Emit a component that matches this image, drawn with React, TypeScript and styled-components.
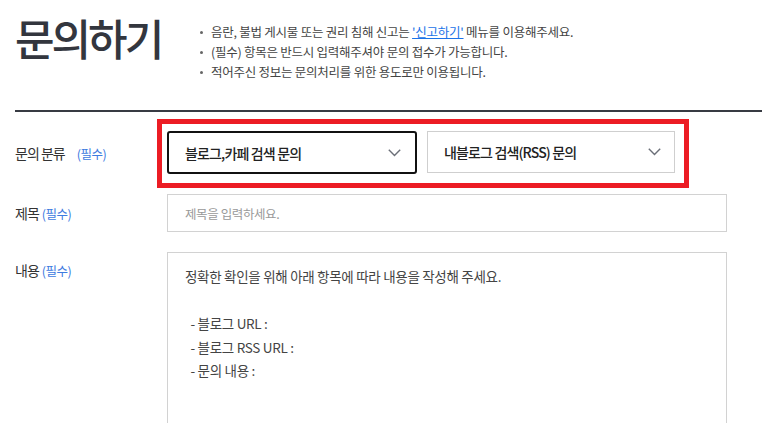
import React from 'react'
import styled, { createGlobalStyle } from 'styled-components'

const GlobalStyle = createGlobalStyle`
  body {
    margin: 0;
    background: #fff;
    font-family: 'Noto Sans CJK KR', 'Noto Sans', sans-serif;
    color: #333;
  }
`

const Page = styled.div`
  width: 747px;
  padding-left: 15px;
`

const Header = styled.div`
  display: flex;
  height: 110px;
`

const Title = styled.h1`
  width: 185px;
  margin: 0;
  padding-top: 16px;
  font-size: 43px;
  line-height: 43px;
  font-weight: 500;
  letter-spacing: -3px;
  color: #33363e;
`

const Notices = styled.ul`
  margin: 0;
  padding: 22px 0 0;
  list-style: none;
`

const Notice = styled.li`
  position: relative;
  padding-left: 11px;
  font-size: 12.5px;
  line-height: 20px;
  letter-spacing: -0.25px;
  color: #444;

  &::before {
    content: '';
    position: absolute;
    left: 0;
    top: 9px;
    width: 3px;
    height: 3px;
    border-radius: 50%;
    background: #666;
  }
`

const ReportLink = styled.a`
  color: #1a73e8;
  text-decoration: underline;
`

const Divider = styled.hr`
  margin: 0;
  border: 0;
  height: 2px;
  background: #383b43;
`

const Form = styled.div`
  display: flex;
  flex-direction: column;
  gap: 20px;
  padding-top: 19px;
`

const Row = styled.div<{ $top?: boolean }>`
  display: flex;
  align-items: ${({ $top }) => ($top ? 'flex-start' : 'center')};
`

const Label = styled.div<{ $top?: boolean }>`
  width: 152px;
  flex-shrink: 0;
  padding-top: ${({ $top }) => ($top ? '8px' : '0')};
  font-size: 14px;
  letter-spacing: -1px;
  color: #333;
`

const Required = styled.span<{ $gap?: number }>`
  margin-left: ${({ $gap }) => $gap ?? 3}px;
  font-size: 12.5px;
  letter-spacing: -0.5px;
  color: #3d7be0;
`

const SelectGroup = styled.div`
  position: relative;
  display: flex;
  gap: 10px;
`

const Highlight = styled.div`
  position: absolute;
  left: -10px;
  top: -12px;
  width: 532px;
  height: 69px;
  box-sizing: border-box;
  border: 5px solid #ec1c24;
  pointer-events: none;
`

const Select = styled.div<{ $focused?: boolean }>`
  box-sizing: border-box;
  width: ${({ $focused }) => ($focused ? '250px' : '248px')};
  height: ${({ $focused }) => ($focused ? '43px' : '42px')};
  display: flex;
  align-items: center;
  justify-content: space-between;
  padding: ${({ $focused }) => ($focused ? '0 14px 0 16px' : '0 13px 0 16px')};
  border: ${({ $focused }) => ($focused ? '2px solid #111' : '1px solid #cfcfcf')};
  border-radius: ${({ $focused }) => ($focused ? '3px' : '0')};
  font-size: 14px;
  font-weight: 500;
  letter-spacing: -0.85px;
  color: #222;
`

const TextInput = styled.div`
  box-sizing: border-box;
  width: 560px;
  height: 38px;
  display: flex;
  align-items: center;
  padding-left: 17px;
  border: 1px solid #d2d2d2;
  font-size: 12.5px;
  letter-spacing: -0.4px;
  color: #999;
`

const TextArea = styled.div`
  box-sizing: border-box;
  width: 560px;
  height: 200px;
  padding: 12px 17px;
  border: 1px solid #d2d2d2;
  font-size: 13.5px;
  line-height: 23.5px;
  letter-spacing: -0.3px;
  color: #444;
  white-space: pre;
`

const Chevron = () => (
  <svg width={13} height={8} viewBox="0 0 13 8" fill="none">
    <polyline points="0.8,0.8 6.5,6.5 12.2,0.8" stroke="#6b6f78" strokeWidth={1.4} />
  </svg>
)

const contentGuide = `정확한 확인을 위해 아래 항목에 따라 내용을 작성해 주세요.

  - 블로그 URL :
  - 블로그 RSS URL :
  - 문의 내용 :`

const App: React.FC = () => {
  return (
    <Page>
      <GlobalStyle />
      <Header>
        <Title>문의하기</Title>
        <Notices>
          <Notice>
            음란, 불법 게시물 또는 권리 침해 신고는 <ReportLink>'신고하기'</ReportLink> 메뉴를 이용해주세요.
          </Notice>
          <Notice>(필수) 항목은 반드시 입력해주셔야 문의 접수가 가능합니다.</Notice>
          <Notice>적어주신 정보는 문의처리를 위한 용도로만 이용됩니다.</Notice>
        </Notices>
      </Header>
      <Divider />

      <Form>
        <Row>
          <Label>
            문의 분류<Required $gap={12}>(필수)</Required>
          </Label>
          <SelectGroup>
            <Select $focused>
              블로그,카페 검색 문의
              <Chevron />
            </Select>
            <Select>
              내블로그 검색(RSS) 문의
              <Chevron />
            </Select>
            <Highlight />
          </SelectGroup>
        </Row>

        <Row>
          <Label>
            제목<Required>(필수)</Required>
          </Label>
          <TextInput>제목을 입력하세요.</TextInput>
        </Row>

        <Row $top>
          <Label $top>
            내용<Required>(필수)</Required>
          </Label>
          <TextArea>{contentGuide}</TextArea>
        </Row>
      </Form>
    </Page>
  )
}

export default App
